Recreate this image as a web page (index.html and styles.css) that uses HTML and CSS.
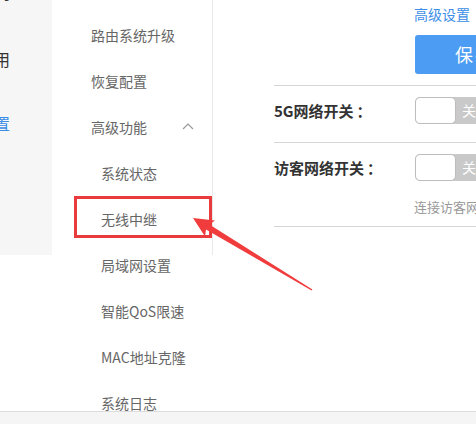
FILE: index.html
```html
<!DOCTYPE html>
<html lang="zh-CN">
<head>
<meta charset="utf-8">
<title>高级功能</title>
<link rel="stylesheet" href="styles.css">
</head>
<body>
<div class="page">
  <div class="main">
    <aside class="side">
      <div class="side-item">无线网</div>
      <div class="side-item">常用</div>
      <div class="side-item active">高级设置</div>
    </aside>
    <nav class="menu">
      <div class="menu-list">
        <div class="menu-item">路由系统升级</div>
        <div class="menu-item">恢复配置</div>
        <div class="menu-item group">
          <span>高级功能</span>
          <svg class="chev" width="12" height="8" viewBox="0 0 12 8"><polyline points="1,7 6,2 11,7" fill="none" stroke="#999" stroke-width="1.2"/></svg>
        </div>
        <div class="menu-item sub">系统状态</div>
        <div class="menu-item sub">无线中继</div>
        <div class="menu-item sub">局域网设置</div>
        <div class="menu-item sub">智能QoS限速</div>
        <div class="menu-item sub">MAC地址克隆</div>
        <div class="menu-item sub">系统日志</div>
      </div>
    </nav>
    <section class="content">
      <div class="top-link">高级设置</div>
      <div class="save-btn">保存</div>
      <div class="row">
        <div class="line">
          <div class="label">5G网络开关<span class="colon">：</span></div>
          <div class="toggle"><span class="knob"></span><span class="toggle-text">关</span></div>
        </div>
      </div>
      <div class="row">
        <div class="line">
          <div class="label">访客网络开关<span class="colon">：</span></div>
          <div class="toggle"><span class="knob"></span><span class="toggle-text">关</span></div>
        </div>
        <div class="hint">连接访客网络的设备</div>
      </div>
      <div class="row-end"></div>
    </section>
  </div>
  <div class="footer"></div>
  <svg class="annot" width="476" height="424" viewBox="0 0 476 424">
    <rect x="75.5" y="197.5" width="135" height="39" fill="none" stroke="#e93a3e" stroke-width="3"/>
    <polygon fill="#f03c3c" points="193,218 215,220.5 209.4,224.4 312.4,289.6 311.6,290.6 206,229.6 205,236.5"/>
  </svg>
</div>
</body>
</html>
```
FILE: styles.css
```css
html, body {
  margin: 0;
  padding: 0;
  background: #fff;
}
body {
  font-family: "Noto Sans CJK SC", "Microsoft YaHei", sans-serif;
  width: 476px;
  height: 424px;
  overflow: hidden;
}
.page {
  position: relative;
  width: 476px;
  height: 424px;
  overflow: hidden;
}
.main {
  display: flex;
  align-items: flex-start;
  height: 411px;
}
.side {
  width: 52px;
  height: 255px;
  flex: none;
  background: #f6f6f6;
  overflow: hidden;
}
.side-item {
  width: 10px;
  height: 64px;
  line-height: 64px;
  display: flex;
  justify-content: flex-end;
  white-space: nowrap;
  font-size: 16px;
  color: #333;
}
.side-item:first-child {
  margin-top: -40px;
  margin-bottom: 3px;
}
.side-item.active {
  color: #3b8de6;
}
.menu {
  width: 161px;
  height: 255px;
  flex: none;
  box-sizing: border-box;
  border-right: 1px solid #e9e9e9;
}
.menu-list {
  padding-top: 12px;
}
.menu-item {
  height: 46px;
  line-height: 46px;
  padding-left: 39px;
  padding-right: 18px;
  font-size: 14px;
  color: #666;
  white-space: nowrap;
}
.menu-item.group {
  display: flex;
  justify-content: space-between;
  align-items: center;
}
.menu-item.sub {
  padding-left: 49px;
}
.chev {
  display: block;
  margin-top: -3px;
}
.content {
  flex: 1;
  padding-left: 61px;
  min-width: 0;
}
.top-link {
  margin-top: 4px;
  margin-left: 140px;
  height: 20px;
  line-height: 20px;
  font-size: 14px;
  color: #3b8de6;
  white-space: nowrap;
}
.save-btn {
  margin-top: 11px;
  margin-left: 141px;
  width: 120px;
  height: 39px;
  line-height: 39px;
  border-radius: 3px;
  background: #4b9cf2;
  color: #fff;
  font-size: 18px;
  text-align: center;
  letter-spacing: 2px;
}
.row {
  margin-top: 11px;
  border-top: 1px solid #d6d6d6;
  padding: 11px 0 18px;
}
.row + .row {
  margin-top: 0;
  padding-bottom: 9px;
}
.line {
  display: flex;
  flex-wrap: nowrap;
  align-items: center;
  height: 27px;
}
.label {
  width: 141px;
  flex: none;
  font-size: 15px;
  font-weight: bold;
  color: #333;
  white-space: nowrap;
}
.colon {
  margin-left: 3px;
  font-family: "Noto Sans CJK TC", "Noto Sans CJK SC", sans-serif;
}
.toggle {
  display: flex;
  flex: none;
  align-items: center;
  width: 100px;
  height: 27px;
  background: #c9c9c9;
  border-radius: 5px;
}
.knob {
  width: 41px;
  height: 27px;
  box-sizing: border-box;
  background: #fff;
  border: 1px solid #bdbdbd;
  border-radius: 5px;
}
.toggle-text {
  margin-left: 6px;
  color: #fff;
  font-size: 14px;
  line-height: 27px;
}
.hint {
  margin-top: 16px;
  padding-left: 140px;
  height: 20px;
  line-height: 20px;
  font-size: 13px;
  color: #999;
  white-space: nowrap;
}
.row-end {
  border-top: 1px solid #d6d6d6;
}
.footer {
  height: 12px;
  border-top: 1px solid #dcdcdc;
  background: #f5f5f5;
}
.annot {
  position: absolute;
  top: 0;
  left: 0;
  pointer-events: none;
}
```
